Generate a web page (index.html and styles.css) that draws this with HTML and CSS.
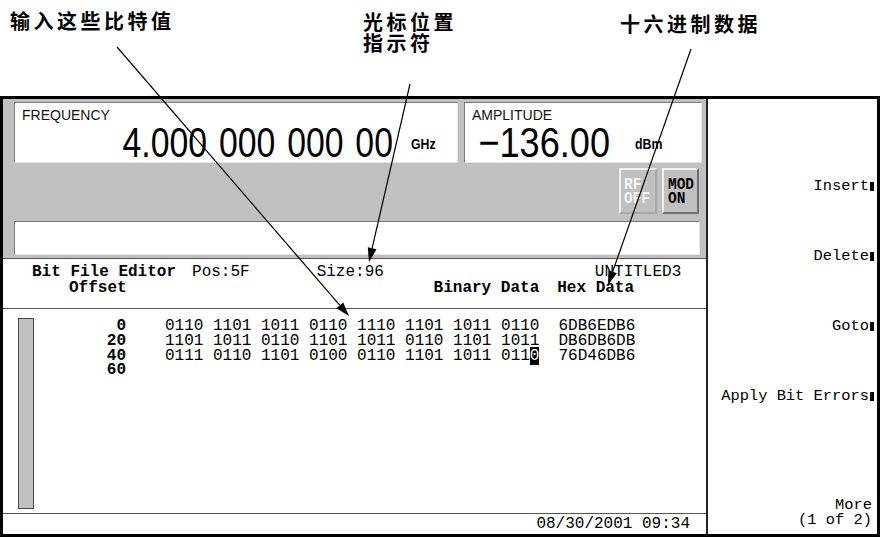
FILE: index.html
```html
<!DOCTYPE html>
<html>
<head>
<meta charset="utf-8">
<link rel="stylesheet" href="styles.css">
</head>
<body>
<div class="page">
  <div class="notes">
    <div class="note n1">输入这些比特值</div>
    <div class="note n2">光标位置<br>指示符</div>
    <div class="note n3">十六进制数据</div>
  </div>
  <div class="inst">
    <div class="screen">
      <div class="top">
        <div class="readouts">
          <div class="box freq">
            <div class="label">FREQUENCY</div>
            <div class="value"><span class="num">4.000 000 000 00</span><span class="unit">GHz</span></div>
          </div>
          <div class="box amp">
            <div class="label">AMPLITUDE</div>
            <div class="value"><span class="num">−136.00</span><span class="unit">dBm</span></div>
          </div>
        </div>
        <div class="buttons">
          <div class="btn rf-off"><span class="btn-text">RF<br>OFF</span></div>
          <div class="btn mod-on"><span class="btn-text">MOD<br>ON</span></div>
        </div>
        <div class="box msg"></div>
      </div>
      <div class="editor">
        <div class="hdr1"><span class="b">Bit File Editor</span><span class="t-pos">Pos:5F</span><span class="t-size">Size:96</span><span class="t-file">UNTITLED3</span></div>
        <div class="hdr2"><span class="b h-off">Offset</span><span class="b h-bin">Binary Data</span><span class="b h-hex">Hex Data</span></div>
        <div class="body">
          <div class="scroll"></div>
          <div class="rows">
            <div class="row"><span class="ofs">0</span><span class="bin">0110 1101 1011 0110 1110 1101 1011 0110</span><span class="hex">6DB6EDB6</span></div>
            <div class="row"><span class="ofs">20</span><span class="bin">1101 1011 0110 1101 1011 0110 1101 1011</span><span class="hex">DB6DB6DB</span></div>
            <div class="row"><span class="ofs">40</span><span class="bin">0111 0110 1101 0100 0110 1101 1011 011<span class="cursor">0</span></span><span class="hex">76D46DB6</span></div>
            <div class="row"><span class="ofs">60</span></div>
          </div>
        </div>
        <div class="status">08/30/2001 09:34</div>
      </div>
    </div>
    <div class="keys">
      <div class="key">Insert<i class="mark"></i></div>
      <div class="key">Delete<i class="mark"></i></div>
      <div class="key">Goto<i class="mark"></i></div>
      <div class="key">Apply Bit Errors<i class="mark"></i></div>
      <div class="more">More<br>(1 of 2)</div>
    </div>
  </div>
  <svg class="arrows" width="880" height="537" viewBox="0 0 880 537">
    <g stroke="#000" stroke-width="1.2" fill="none">
      <line x1="117" y1="47" x2="339.9" y2="305.4"/>
      <line x1="410" y1="84" x2="372.1" y2="248.4"/>
      <line x1="691" y1="49" x2="612.6" y2="271.8"/>
    </g>
    <g fill="#000">
      <polygon points="349,316 336.45,308.34 343.27,302.46"/>
      <polygon points="369,262 367.76,247.35 376.53,249.37"/>
      <polygon points="608,285 608.4,270.3 616.89,273.28"/>
    </g>
  </svg>
</div>
</body>
</html>
```

FILE: styles.css
```css
* { box-sizing: border-box; margin: 0; padding: 0; }
html, body { width: 880px; height: 537px; overflow: hidden; background: #fff; }
body { font-family: "Liberation Mono", "DejaVu Sans Mono", monospace; color: #000; }

.page { position: relative; width: 880px; height: 537px; }

/* annotations */
.notes {
  height: 96px;
  display: flex;
  align-items: flex-start;
  font-family: "Noto Sans CJK SC", "Noto Sans CJK JP", sans-serif;
  font-weight: 700;
  font-size: 20px;
  line-height: 21px;
  letter-spacing: 3.5px;
}
.n1 { width: 363px; padding-left: 10px; padding-top: 10px; }
.n2 { width: 257px; padding-top: 11px; }
.n3 { padding-top: 13px; }

/* instrument */
.inst {
  height: 441px;
  border: 3px solid #000;
  display: flex;
}
.screen { width: 703px; display: flex; flex-direction: column; }

.top {
  background: #c0c0c0;
  height: 160px;
  border-bottom: 1px solid #555;
  padding: 3px 0 0 11px;
}
.readouts { display: flex; gap: 6px; height: 61px; }
.box {
  background: #fff;
  border: 1px solid;
  border-color: #7a7a7a #e6e6e6 #e6e6e6 #7a7a7a;
}
.freq { width: 444px; }
.amp { width: 238px; }
.label {
  font-family: "Liberation Sans", Arial, sans-serif;
  font-size: 14px;
  line-height: 14px;
  height: 19px;
  padding: 5px 0 0 7px;
  color: #111;
}
.value { display: flex; align-items: flex-start; justify-content: flex-end; height: 36px; margin-top: 3px; }
.freq .value { padding-right: 16px; }
.amp .value { padding-right: 33px; }
.num {
  display: inline-block;
  font-family: "Liberation Sans", Arial, sans-serif;
  font-size: 42px;
  line-height: 36px;
  word-spacing: 3px;
  white-space: pre;
  transform-origin: right center;
}
.freq .num { transform: scaleX(0.805); }
.amp .num { transform: scaleX(0.86); }
.unit {
  display: inline-block;
  font-family: "Liberation Sans", Arial, sans-serif;
  font-weight: 700;
  font-size: 15px;
  line-height: 16px;
  margin-top: 11px;
  margin-left: 18px;
  transform: scaleX(0.82);
  transform-origin: left center;
}
.amp .unit { margin-left: 25px; }

.buttons {
  display: flex;
  justify-content: flex-end;
  gap: 5px;
  height: 46px;
  margin-top: 5px;
  padding-right: 7px;
}
.btn {
  width: 38px;
  font-family: "Liberation Mono", monospace;
  font-weight: 700;
  font-size: 17px;
  line-height: 14px;
  padding: 8px 0 0 3px;
}
.btn-text { display: inline-block; transform: scaleX(0.85); transform-origin: left top; }
.rf-off {
  color: #f6f6f6;
  border: 2px solid;
  border-color: #f0f0f0 #a8a8a8 #a8a8a8 #f0f0f0;
}
.mod-on {
  width: 37px;
  color: #000;
  padding-left: 4px;
  border: 2px solid;
  border-color: #f0f0f0 #707070 #707070 #f0f0f0;
}
.msg { height: 34px; margin-top: 7px; margin-right: 6px; }

/* editor */
.editor { flex: 1; display: flex; flex-direction: column; font-size: 16px; }
.b { font-weight: 700; }
.hdr1, .hdr2 { display: flex; height: 16px; line-height: 16px; white-space: pre; }
.hdr1 { margin-top: 5px; padding-left: 29px; }
.t-pos { margin-left: 16px; }
.t-size { margin-left: 67px; }
.t-file { margin-left: 211px; }
.hdr2 { padding-left: 66px; }
.h-bin { margin-left: 307px; }
.h-hex { margin-left: 18px; }

.body {
  flex: 1;
  margin-top: 12px;
  border-top: 1px solid #555;
  display: flex;
  align-items: flex-start;
}
.scroll {
  width: 16px;
  height: 191px;
  margin-top: 9px;
  margin-left: 15px;
  background: #c0c0c0;
  border: 1px solid #484848;
}
.rows { padding-top: 10px; }
.row { display: flex; height: 14.8px; line-height: 15px; white-space: pre; }
.ofs { width: 92px; text-align: right; font-weight: 700; }
.bin { margin-left: 39px; }
.hex { margin-left: 19px; }
.cursor { background: #000; color: #fff; }

.status {
  height: 21px;
  border-top: 1px solid #555;
  text-align: right;
  padding-right: 16px;
  line-height: 20px;
}

/* softkeys */
.keys {
  flex: 1;
  border-left: 2px solid #222;
  display: flex;
  flex-direction: column;
  align-items: flex-end;
  padding: 80px 3px 6px 0;
  font-size: 15.4px;
}
.key { height: 15px; line-height: 15px; margin-bottom: 55px; display: flex; align-items: center; white-space: pre; }
.mark { display: inline-block; width: 4px; height: 9px; background: #000; margin-left: 1px; }
.more { margin-top: auto; text-align: right; line-height: 15px; padding-right: 2px; white-space: pre; }

.arrows { position: absolute; left: 0; top: 0; pointer-events: none; }
```
